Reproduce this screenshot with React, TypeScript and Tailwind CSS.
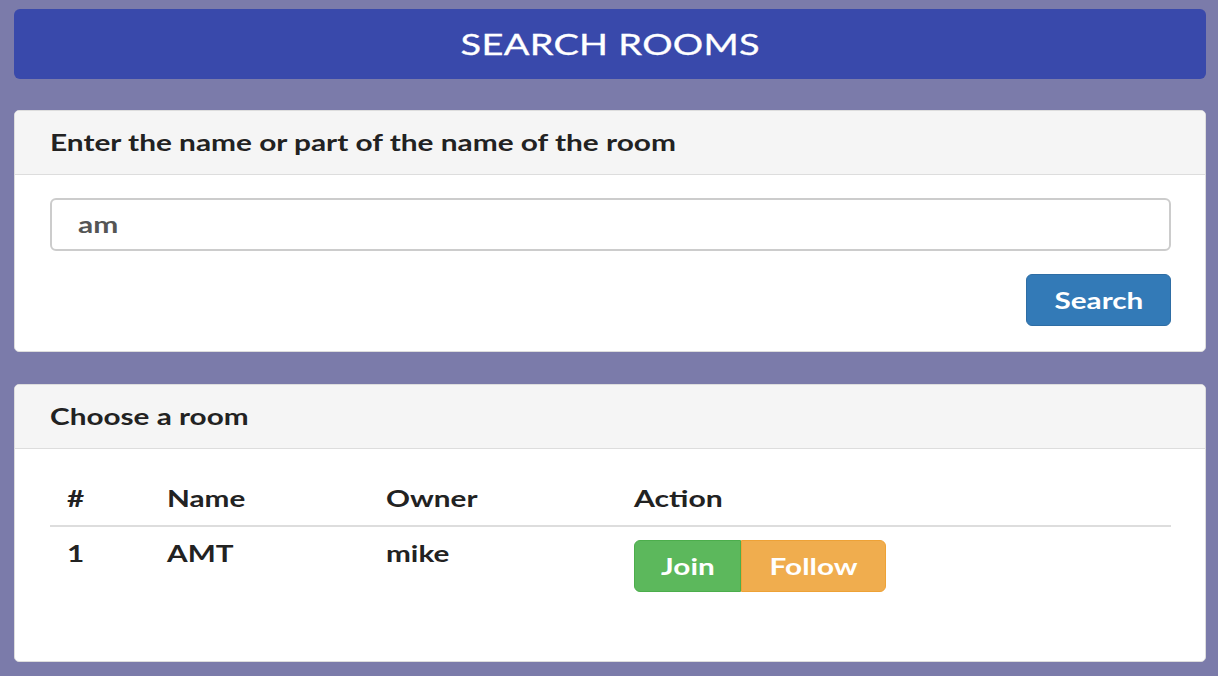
export default function App() {
  const rooms = [{ id: 1, name: "AMT", owner: "mike" }];

  return (
    <div
      className="min-h-[676px] bg-[#7b7baa] pl-[14px] pr-[12px] pt-[9px] pb-4 text-[#333]"
      style={{ fontFamily: "Lato, 'Noto Sans', sans-serif" }}
    >
      {/* title bar */}
      <div className="h-[70px] rounded-[6px] bg-[#3949ab] flex items-center justify-center">
        <h1 className="inline-block scale-x-[1.31] text-[29px] text-white tracking-[0.2px] [-webkit-text-stroke:0.3px_white]">
          SEARCH ROOMS
        </h1>
      </div>

      {/* search panel */}
      <div className="mt-[31px] rounded-[5px] bg-white border border-[#ddd] overflow-hidden">
        <div className="h-[64px] bg-[#f5f5f5] border-b border-[#ddd] flex items-center px-[35px]">
          <h2 className="inline-block origin-left scale-x-[1.355] text-[22px] font-bold text-[#222]">
            Enter the name or part of the name of the room
          </h2>
        </div>
        <div className="pl-[35px] pr-[34px] pt-[23px] pb-[25px]">
          <div className="w-full h-[53px] rounded-[6px] border-2 border-[#ccc] px-[26px] flex items-center">
            <span className="inline-block origin-left scale-x-[1.36] text-[22px] font-bold text-[#555]">am</span>
          </div>
          <div className="flex justify-end mt-[23px]">
            <button className="h-[52px] w-[145px] rounded-[6px] bg-[#337ab7] border border-[#2e6da4] text-white text-[22px] font-bold">
              <span className="inline-block scale-x-[1.35]">Search</span>
            </button>
          </div>
        </div>
      </div>

      {/* results panel */}
      <div className="mt-[32px] rounded-[5px] bg-white border border-[#ddd] overflow-hidden">
        <div className="h-[64px] bg-[#f5f5f5] border-b border-[#ddd] flex items-center px-[35px]">
          <h2 className="inline-block origin-left scale-x-[1.35] text-[22px] font-bold text-[#222]">Choose a room</h2>
        </div>
        <div className="pl-[35px] pr-[34px] pt-[28px] pb-[69px]">
          <table className="w-full text-left text-[22px] font-bold text-[#222]">
            <thead>
              <tr className="border-b-2 border-[#ddd]">
                <th className="w-[100px] h-[49px] pl-[17px] pb-[6px] align-middle font-bold">
                  <span className="inline-block origin-left scale-x-[1.35]">#</span>
                </th>
                <th className="w-[219px] pl-[17px] pb-[6px] font-bold">
                  <span className="inline-block origin-left scale-x-[1.35]">Name</span>
                </th>
                <th className="w-[248px] pl-[17px] pb-[6px] font-bold">
                  <span className="inline-block origin-left scale-x-[1.35]">Owner</span>
                </th>
                <th className="pl-[17px] pb-[6px] font-bold">
                  <span className="inline-block origin-left scale-x-[1.37]">Action</span>
                </th>
              </tr>
            </thead>
            <tbody>
              {rooms.map((r) => (
                <tr key={r.id}>
                  <td className="pl-[17px] pt-[10px] align-top">
                    <span className="inline-block origin-left scale-x-[1.35]">{r.id}</span>
                  </td>
                  <td className="pl-[17px] pt-[10px] align-top">
                    <span className="inline-block origin-left scale-x-[1.35]">{r.name}</span>
                  </td>
                  <td className="pl-[17px] pt-[10px] align-top">
                    <span className="inline-block origin-left scale-x-[1.35]">{r.owner}</span>
                  </td>
                  <td className="pl-[17px] pt-[13px] align-top">
                    <div className="inline-flex">
                      <button className="h-[52px] w-[107px] rounded-l-[6px] bg-[#5cb85c] border border-[#4cae4c] text-white text-[22px] font-bold">
                        <span className="inline-block scale-x-[1.35]">Join</span>
                      </button>
                      <button className="h-[52px] w-[145px] rounded-r-[6px] bg-[#f0ad4e] border border-[#eea236] text-white text-[22px] font-bold">
                        <span className="inline-block scale-x-[1.35]">Follow</span>
                      </button>
                    </div>
                  </td>
                </tr>
              ))}
            </tbody>
          </table>
        </div>
      </div>
    </div>
  );
}
